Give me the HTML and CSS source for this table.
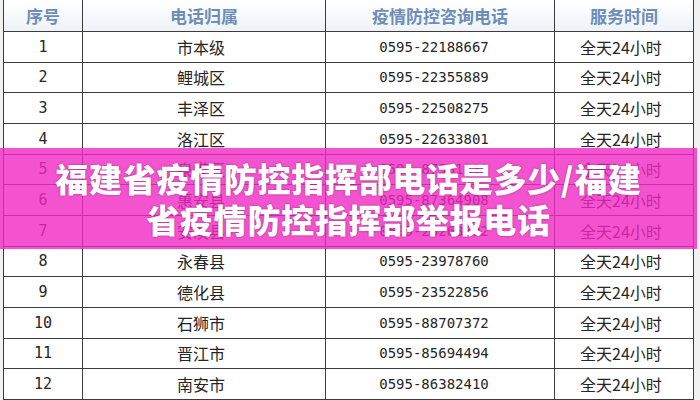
FILE: index.html
```html
<!DOCTYPE html>
<html lang="zh">
<head>
<meta charset="utf-8">
<title>泉州疫情防控咨询电话</title>
<link rel="stylesheet" href="styles.css">
</head>
<body>
<div class="page">
  <table class="sheet">
    <colgroup>
      <col class="c1"><col class="c2"><col class="c3"><col class="c4">
    </colgroup>
    <thead>
      <tr class="head"><th>序号</th><th>电话归属</th><th>疫情防控咨询电话</th><th>服务时间</th></tr>
    </thead>
    <tbody>
      <tr><td class="num">1</td><td>市本级</td><td class="tel">0595-22188667</td><td>全天24小时</td></tr>
      <tr><td class="num">2</td><td>鲤城区</td><td class="tel">0595-22355889</td><td>全天24小时</td></tr>
      <tr><td class="num">3</td><td>丰泽区</td><td class="tel">0595-22508275</td><td>全天24小时</td></tr>
      <tr><td class="num">4</td><td>洛江区</td><td class="tel">0595-22633801</td><td>全天24小时</td></tr>
      <tr><td class="num">5</td><td>泉港区</td><td class="tel">0595-87981311</td><td>全天24小时</td></tr>
      <tr><td class="num">6</td><td>惠安县</td><td class="tel">0595-87364908</td><td>全天24小时</td></tr>
      <tr><td class="num">7</td><td>安溪县</td><td class="tel">0595-23263592</td><td>全天24小时</td></tr>
      <tr><td class="num">8</td><td>永春县</td><td class="tel">0595-23978760</td><td>全天24小时</td></tr>
      <tr><td class="num">9</td><td>德化县</td><td class="tel">0595-23522856</td><td>全天24小时</td></tr>
      <tr><td class="num">10</td><td>石狮市</td><td class="tel">0595-88707372</td><td>全天24小时</td></tr>
      <tr><td class="num">11</td><td>晋江市</td><td class="tel">0595-85694494</td><td>全天24小时</td></tr>
      <tr><td class="num">12</td><td>南安市</td><td class="tel">0595-86382410</td><td>全天24小时</td></tr>
    </tbody>
  </table>
  <div class="banner">福建省疫情防控指挥部电话是多少/福建<br>省疫情防控指挥部举报电话</div>
</div>
</body>
</html>
```

FILE: styles.css
```css
html, body {
  margin: 0;
  padding: 0;
  background: #f1f1f1;
}
.page {
  position: relative;
  width: 700px;
  height: 400px;
  overflow: hidden;
  padding-left: 3px;
  box-sizing: border-box;
}
.sheet {
  border-collapse: collapse;
  table-layout: fixed;
  width: 690px;
  background: #ffffff;
  font-family: "Noto Sans CJK SC", sans-serif;
  color: #262626;
  font-size: 16px;
}
.c1 { width: 79px; }
.c2 { width: 243px; }
.c3 { width: 229px; }
.c4 { width: 139px; }
.sheet th, .sheet td {
  border: 1px solid #3c3c3c;
  padding: 0;
  text-align: center;
  line-height: 20px;
  white-space: nowrap;
  overflow: hidden;
}
.sheet th {
  border-top: none;
  height: 31px;
  font-size: 17px;
  font-weight: 700;
  color: #6b8db8;
  background: linear-gradient(#ffffff, #eef2f7);
}
.sheet tbody tr {
  height: 30.67px;
}
.sheet td {
  padding-right: 6px;
}
.sheet .num {
  font-family: "DejaVu Sans Mono", monospace;
  font-size: 15px;
  padding-right: 0;
}
.sheet .tel {
  font-family: "DejaVu Sans Mono", monospace;
  font-size: 14px;
  letter-spacing: 0;
  padding-right: 12px;
}
.banner {
  position: absolute;
  left: 0;
  right: 3px;
  top: 148px;
  height: 101px;
  box-sizing: border-box;
  padding-top: 10px;
  background: rgba(240, 40, 195, 0.8);
  color: #ffffff;
  font-family: "Noto Sans CJK SC", sans-serif;
  font-weight: 900;
  font-size: 33px;
  letter-spacing: 0.7px;
  line-height: 41px;
  text-align: center;
  text-shadow: 0 0 2px rgba(90, 0, 70, 0.55);
}
```
